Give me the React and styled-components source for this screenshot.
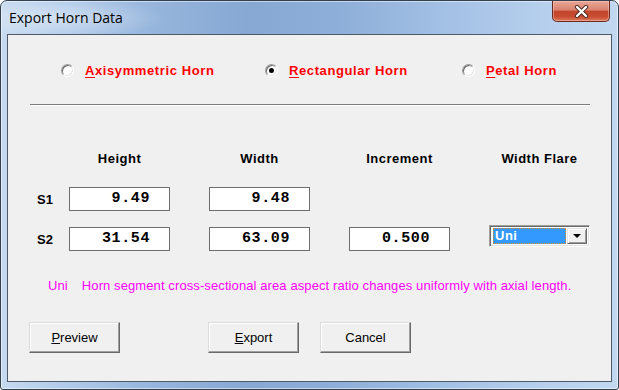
import React from 'react';
import styled, { createGlobalStyle } from 'styled-components';

const GlobalStyle = createGlobalStyle`
  html, body {
    margin: 0;
    padding: 0;
    background: #ffffff;
  }
`;

const Window = styled.div`
  width: 619px;
  height: 390px;
  box-sizing: border-box;
  border: 1px solid #33404f;
  border-radius: 7px 7px 3px 3px;
  background: linear-gradient(
    to right,
    #c6daef 0%,
    #b2cbea 10%,
    #97b6dd 24%,
    #86a8d3 40%,
    #8eafd9 55%,
    #a3c0e5 72%,
    #b6cfed 88%,
    #c2d8f0 100%
  );
  box-shadow: inset 0 0 0 1px rgba(255, 255, 255, 0.5);
  display: flex;
  flex-direction: column;
  overflow: hidden;
  font-family: 'Liberation Sans', Arial, sans-serif;
`;

const TitleBar = styled.div`
  height: 33px;
  padding: 0 8px;
  display: flex;
  align-items: flex-start;
  background: radial-gradient(ellipse 110px 20px at 55px 17px, rgba(255, 255, 255, 0.4), transparent);
`;

const Title = styled.div`
  margin-top: 9px;
  font-family: 'Open Sans', 'Noto Sans', sans-serif;
  font-size: 14px;
  line-height: 16px;
  color: #000;
`;

const CloseButton = styled.div`
  margin-left: auto;
  width: 58px;
  height: 21px;
  box-sizing: border-box;
  border: 1px solid #6b2a1f;
  border-top: none;
  border-radius: 0 0 5px 5px;
  background: linear-gradient(
    to bottom,
    #e8a797 0%,
    #d9826f 45%,
    #c2452c 52%,
    #c84c32 78%,
    #dc7a5c 100%
  );
  box-shadow: inset 0 0 0 1px rgba(255, 210, 200, 0.45);
  display: flex;
  align-items: center;
  justify-content: center;
`;

const Client = styled.div`
  margin: 0 6px 7px;
  height: 348px;
  box-sizing: border-box;
  border: 1px solid #4d5a69;
  background: #f0f0f0;
  display: flex;
  flex-direction: column;
`;

const RadioRow = styled.div`
  margin-top: 29px;
  padding-left: 53px;
  height: 13px;
  display: grid;
  grid-template-columns: 204px 197px auto;
  align-items: center;
`;

const RadioItem = styled.div`
  display: flex;
  align-items: center;
  gap: 11px;
`;

const RadioDot = styled.span`
  width: 13px;
  height: 13px;
  box-sizing: border-box;
  border-radius: 50%;
  border: 1px solid;
  border-color: #9a9a9a #ffffff #ffffff #9a9a9a;
  background: #ffffff;
  box-shadow: inset 1px 1px 0 #6a6a6a, inset -1px -1px 0 #e3e3e3;
  display: flex;
  align-items: center;
  justify-content: center;

  &::after {
    content: '';
    width: 5px;
    height: 5px;
    border-radius: 50%;
    background: ${(p) => (p.$checked ? '#000000' : 'transparent')};
  }
`;

const RadioLabel = styled.span`
  font-size: 13px;
  font-weight: bold;
  letter-spacing: 0.6px;
  line-height: 13px;
  color: #ff0000;

  u {
    text-decoration-thickness: 1px;
    text-underline-offset: 2px;
  }
`;

const Divider = styled.div`
  margin: 27px 21px 0 22px;
  height: 1px;
  background: #7c7c7c;
  border-bottom: 1px solid #ffffff;
`;

const Table = styled.div`
  margin-top: 45px;
  padding-left: 29px;
  display: grid;
  grid-template-columns: 32px repeat(4, 140px);
  grid-template-rows: 20px 24px 24px;
  row-gap: 16px;
`;

const Header = styled.div`
  width: 101px;
  text-align: center;
  font-size: 13px;
  font-weight: bold;
  letter-spacing: 0.5px;
  line-height: 16px;
  color: #000;
`;

const RowLabel = styled.div`
  display: flex;
  align-items: center;
  font-size: 13px;
  font-weight: bold;
  color: #000;
`;

const ValueBox = styled.div`
  width: 101px;
  height: 24px;
  box-sizing: border-box;
  border: 1px solid #6d6d6d;
  background: #ffffff;
  padding-right: 19px;
  padding-bottom: 2px;
  display: flex;
  align-items: center;
  justify-content: flex-end;
  font-family: 'Liberation Mono', 'Courier New', monospace;
  font-size: 15px;
  font-weight: bold;
  letter-spacing: 0.6px;
  color: #000;
`;

const Combo = styled.div`
  margin-top: -2px;
  width: 101px;
  height: 22px;
  box-sizing: border-box;
  border: 1px solid;
  border-color: #a0a0a0 #ffffff #ffffff #a0a0a0;
  box-shadow: inset 1px 1px 0 #696969, inset -1px -1px 0 #e3e3e3;
  background: #ffffff;
  padding: 2px 2px 2px 3px;
  display: flex;
  gap: 1px;
`;

const ComboValue = styled.div`
  flex: 1;
  box-sizing: border-box;
  background: #3399ff;
  outline: 1px dotted #e08a30;
  outline-offset: -1px;
  color: #ffffff;
  font-size: 13px;
  font-weight: bold;
  letter-spacing: 0.5px;
  line-height: 16px;
  padding-left: 2px;
`;

const ComboArrow = styled.div`
  width: 20px;
  box-sizing: border-box;
  background: #f0f0f0;
  border: 1px solid;
  border-color: #e3e3e3 #696969 #696969 #e3e3e3;
  box-shadow: inset 1px 1px 0 #ffffff, inset -1px -1px 0 #a0a0a0;
  display: flex;
  align-items: center;
  justify-content: center;

  &::after {
    content: '';
    border-left: 4px solid transparent;
    border-right: 4px solid transparent;
    border-top: 4px solid #000000;
  }
`;

const Note = styled.div`
  margin-top: 27px;
  padding-left: 40px;
  display: flex;
  gap: 14px;
  font-size: 13px;
  letter-spacing: 0.1px;
  line-height: 15px;
  color: #ff00ff;
`;

const ButtonRow = styled.div`
  margin-top: 29px;
  padding-left: 21px;
  display: flex;
`;

const Button = styled.div`
  margin-left: ${(p) => p.$offset || 0}px;
  width: 91px;
  height: 31px;
  box-sizing: border-box;
  background: #f0f0f0;
  border: 1px solid;
  border-color: #dcdcdc #696969 #696969 #dcdcdc;
  box-shadow: inset -1px -1px 0 #a0a0a0, inset 1px 1px 0 #ffffff;
  display: flex;
  align-items: center;
  justify-content: center;
  font-size: 13px;
  color: #000;
  padding-bottom: 1px;
`;

const CloseGlyph = () => (
  <svg width="15" height="13" viewBox="0 0 15 13">
    <path d="M3 2 L12 11 M12 2 L3 11" stroke="#4a2a22" strokeWidth="4.2" strokeLinecap="round" />
    <path d="M3 2 L12 11 M12 2 L3 11" stroke="#ffffff" strokeWidth="2.4" strokeLinecap="round" />
  </svg>
);

const radios = [
  { key: 'A', rest: 'xisymmetric Horn', checked: false },
  { key: 'R', rest: 'ectangular Horn', checked: true },
  { key: 'P', rest: 'etal Horn', checked: false },
];

const headers = ['Height', 'Width', 'Increment', 'Width Flare'];

const App = () => {
  return (
    <>
      <GlobalStyle />
      <Window>
        <TitleBar>
          <Title>Export Horn Data</Title>
          <CloseButton>
            <CloseGlyph />
          </CloseButton>
        </TitleBar>
        <Client>
          <RadioRow>
            {radios.map((r) => (
              <RadioItem key={r.key}>
                <RadioDot $checked={r.checked} />
                <RadioLabel>
                  <u>{r.key}</u>
                  {r.rest}
                </RadioLabel>
              </RadioItem>
            ))}
          </RadioRow>
          <Divider />
          <Table>
            <span />
            {headers.map((h) => (
              <Header key={h}>{h}</Header>
            ))}
            <RowLabel>S1</RowLabel>
            <ValueBox>9.49</ValueBox>
            <ValueBox>9.48</ValueBox>
            <span />
            <span />
            <RowLabel>S2</RowLabel>
            <ValueBox>31.54</ValueBox>
            <ValueBox>63.09</ValueBox>
            <ValueBox>0.500</ValueBox>
            <Combo>
              <ComboValue>Uni</ComboValue>
              <ComboArrow />
            </Combo>
          </Table>
          <Note>
            <span>Uni</span>
            <span>Horn segment cross-sectional area aspect ratio changes uniformly with axial length.</span>
          </Note>
          <ButtonRow>
            <Button>
              <span>
                <u>P</u>review
              </span>
            </Button>
            <Button $offset={88}>
              <span>
                <u>E</u>xport
              </span>
            </Button>
            <Button $offset={21}>Cancel</Button>
          </ButtonRow>
        </Client>
      </Window>
    </>
  );
};

export default App;
